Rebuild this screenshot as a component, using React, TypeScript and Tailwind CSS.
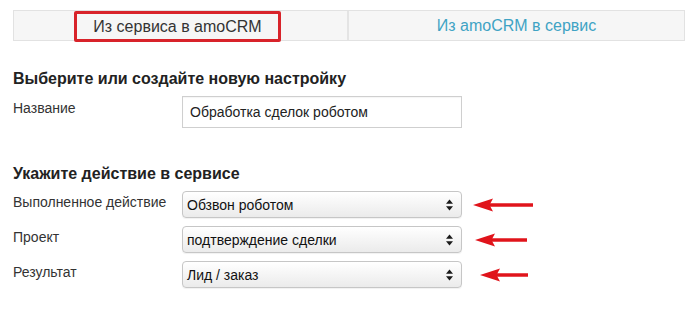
import React from "react";

const Spinner = () => (
  <svg width="7" height="12" viewBox="0 0 7 12" className="shrink-0">
    <path d="M3.5 0.5 L7 4.8 L0 4.8 Z" fill="#1a1a1a" />
    <path d="M3.5 11.5 L7 7.2 L0 7.2 Z" fill="#1a1a1a" />
  </svg>
);

const Arrow = ({ width }: { width: number }) => (
  <svg width={width} height="16" viewBox={`0 0 ${width} 16`} className="shrink-0">
    <path d={`M14 8 L${width} 8`} stroke="#e0141b" strokeWidth="3.5" />
    <path d="M0 8 L20 1.5 L16.5 8 L20 14.5 Z" fill="#e0141b" />
  </svg>
);

const Select = ({ value }: { value: string }) => (
  <div className="flex h-[27px] w-[280px] items-center justify-between rounded-[4px] border border-[#c6c6c6] bg-gradient-to-b from-[#ffffff] to-[#ebebeb] pl-[4px] pr-[8px] pt-[1px] shadow-[0_1px_1px_rgba(0,0,0,0.06)]">
    <span className="text-[14px] leading-[20px] text-[#111]">{value}</span>
    <Spinner />
  </div>
);

const rows = [
  { label: "Выполненное действие", value: "Обзвон роботом", arrow: 60, gap: "ml-[11px]" },
  { label: "Проект", value: "подтверждение сделки", arrow: 52, gap: "ml-[13px]" },
  { label: "Результат", value: "Лид / заказ", arrow: 48, gap: "ml-[18px]" },
];

export default function App() {
  return (
    <div
      className="min-h-[312px] w-[697px] bg-white px-[13px] pt-[10px] text-[#333]"
      style={{ fontFamily: '"Liberation Sans", Arial, sans-serif' }}
    >
      {/* tabs */}
      <div className="flex h-[31px] w-[672px] border border-[#e2e2e2] bg-[#f6f6f6]">
        <div className="flex w-[335px] items-start border-r-2 border-[#e4e4e4]">
          <div className="ml-[60px] flex h-[31px] w-[207px] items-center justify-center rounded-[2px] border-[3px] border-[#d8232a] bg-[#f6f6f6]">
            <span className="text-[16px] leading-[20px] text-[#333]">Из сервиса в amoCRM</span>
          </div>
        </div>
        <div className="flex flex-1 items-center justify-center">
          <span className="text-[16px] leading-[20px] text-[#3fa3c4]">Из amoCRM в сервис</span>
        </div>
      </div>

      <h2 className="mt-[28px] text-[16px] font-bold leading-[20px] text-[#222]">
        Выберите или создайте новую настройку
      </h2>

      <div className="mt-[7px] flex">
        <div className="w-[169px] pt-[2px] text-[14px] leading-[20px]">Название</div>
        <div className="flex h-[32px] w-[280px] items-center border border-[#cfcfcf] bg-white pl-[7px] shadow-[inset_0_1px_1px_rgba(0,0,0,0.04)]">
          <span className="text-[14px] leading-[20px] text-[#222]">Обработка сделок роботом</span>
        </div>
      </div>

      <h2 className="mt-[36px] text-[16px] font-bold leading-[20px] text-[#222]">
        Укажите действие в сервисе
      </h2>

      <div className="mt-[7px] flex flex-col gap-[8px]">
        {rows.map((r) => (
          <div key={r.label} className="flex items-start">
            <div className="w-[169px] pt-[1px] text-[14px] leading-[20px]">{r.label}</div>
            <Select value={r.value} />
            <div className={`${r.gap} flex h-[27px] items-center`}>
              <Arrow width={r.arrow} />
            </div>
          </div>
        ))}
      </div>
    </div>
  );
}
